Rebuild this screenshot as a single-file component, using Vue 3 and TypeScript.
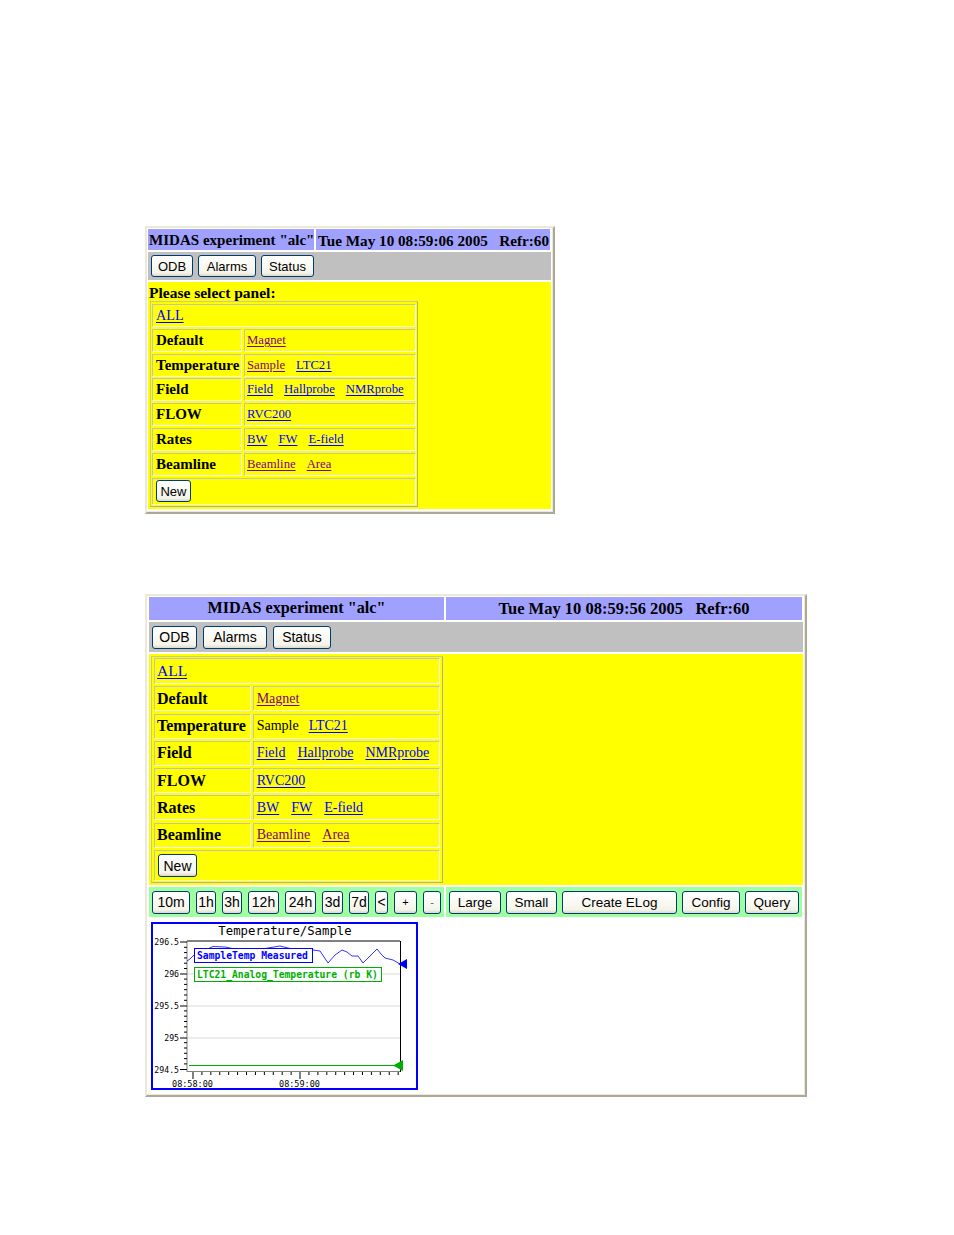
<script setup lang="ts">
interface Btn { label: string; width: number }
interface Link { text: string; visited?: boolean; plain?: boolean }
interface Row { name: string; links: Link[] }

const rowsA: Row[] = [
  { name: 'Default', links: [{ text: 'Magnet', visited: true }] },
  { name: 'Temperature', links: [{ text: 'Sample', visited: true }, { text: 'LTC21' }] },
  { name: 'Field', links: [{ text: 'Field' }, { text: 'Hallprobe' }, { text: 'NMRprobe' }] },
  { name: 'FLOW', links: [{ text: 'RVC200' }] },
  { name: 'Rates', links: [{ text: 'BW' }, { text: 'FW' }, { text: 'E-field' }] },
  { name: 'Beamline', links: [{ text: 'Beamline', visited: true }, { text: 'Area', visited: true }] },
]
const rowsB: Row[] = rowsA.map((r) =>
  r.name === 'Temperature'
    ? { name: r.name, links: [{ text: 'Sample', plain: true }, { text: 'LTC21' }] }
    : r,
)
const navA: Btn[] = [
  { label: 'ODB', width: 42 },
  { label: 'Alarms', width: 58 },
  { label: 'Status', width: 53 },
]
const navB: Btn[] = [
  { label: 'ODB', width: 45 },
  { label: 'Alarms', width: 64 },
  { label: 'Status', width: 58 },
]
const spans: Btn[] = [
  { label: '10m', width: 38 },
  { label: '1h', width: 20 },
  { label: '3h', width: 20 },
  { label: '12h', width: 31 },
  { label: '24h', width: 31 },
  { label: '3d', width: 21 },
  { label: '7d', width: 20 },
  { label: '<', width: 13 },
  { label: '+', width: 23 },
  { label: '-', width: 18 },
]
const actions: Btn[] = [
  { label: 'Large', width: 52 },
  { label: 'Small', width: 51 },
  { label: 'Create ELog', width: 115 },
  { label: 'Config', width: 58 },
  { label: 'Query', width: 54 },
]

const yMajor = [
  { y: 942, t: '296.5' },
  { y: 974, t: '296' },
  { y: 1006, t: '295.5' },
  { y: 1038, t: '295' },
  { y: 1069.5, t: '294.5' },
]
const yMinor = Array.from({ length: 25 }, (_, i) => 942 + i * 5.3).filter(
  (_, i) => i % 6 !== 0,
)
const xMinor = Array.from({ length: 24 }, (_, i) => 193 + i * 8.92).filter(
  (_, i) => i % 12 !== 0,
)
const trace =
  '187,961 190,959 197,952 205,950 213,946.5 225,947 240,950 262,949 280,946 ' +
  '296,950 313,950 320,951 328,963 335,955 342,950 347,952 352,956 358,956 ' +
  '363,963 370,956 377,949 381,954 385,958 393,960 400,964'
</script>

<template>
  <div class="page">
    <section class="win win-a">
      <div class="row head head-a">
        <div class="cell title-a">MIDAS experiment "alc"</div>
        <div class="cell date-a">Tue May 10 08:59:06 2005 &nbsp; Refr:60</div>
      </div>
      <div class="cell nav nav-a">
        <button v-for="b in navA" :key="b.label" class="btn" :style="{ width: b.width + 'px' }">{{ b.label }}</button>
      </div>
      <div class="cell yellow yellow-a">
        <div class="prompt">Please select panel:</div>
        <div class="panel panel-a">
          <div class="pcell full all"><a class="lnk">ALL</a></div>
          <div v-for="r in rowsA" :key="r.name" class="prow">
            <div class="pcell name">{{ r.name }}</div>
            <div class="pcell links">
              <a v-for="l in r.links" :key="l.text" class="lnk" :class="{ visited: l.visited }">{{ l.text }}</a>
            </div>
          </div>
          <div class="pcell full newrow"><button class="btn new">New</button></div>
        </div>
      </div>
    </section>

    <section class="win win-b">
      <div class="row head head-b">
        <div class="cell title-b">MIDAS experiment "alc"</div>
        <div class="cell date-b">Tue May 10 08:59:56 2005 &nbsp; Refr:60</div>
      </div>
      <div class="cell nav nav-b">
        <button v-for="b in navB" :key="b.label" class="btn" :style="{ width: b.width + 'px' }">{{ b.label }}</button>
      </div>
      <div class="cell yellow yellow-b">
        <div class="panel panel-b">
          <div class="pcell full all"><a class="lnk">ALL</a></div>
          <div v-for="r in rowsB" :key="r.name" class="prow">
            <div class="pcell name">{{ r.name }}</div>
            <div class="pcell links">
              <template v-for="l in r.links" :key="l.text">
                <span v-if="l.plain" class="plain">{{ l.text }}</span>
                <a v-else class="lnk" :class="{ visited: l.visited }">{{ l.text }}</a>
              </template>
            </div>
          </div>
          <div class="pcell full newrow"><button class="btn new">New</button></div>
        </div>
      </div>
      <div class="row tools">
        <div class="cell green spans">
          <button
            v-for="b in spans"
            :key="b.label"
            class="btn tool"
            :class="{ mini: b.label === '+' || b.label === '-', dim: b.label === '-' }"
            :style="{ width: b.width + 'px' }"
          >{{ b.label }}</button>
        </div>
        <div class="cell green actions">
          <button v-for="b in actions" :key="b.label" class="btn tool act" :style="{ width: b.width + 'px' }">{{ b.label }}</button>
        </div>
      </div>
      <div class="cell plotcell">
        <svg class="plot" width="267" height="168" viewBox="151 922 267 168">
          <rect x="152" y="923" width="265" height="166" fill="#fff" stroke="#0000ff" stroke-width="2" />
          <text x="285" y="935" class="ptitle" text-anchor="middle">Temperature/Sample</text>
          <g stroke="#d8d8d8">
            <line v-for="m in yMajor.slice(1, 4)" :key="m.y" x1="187" x2="400" :y1="m.y" :y2="m.y" />
          </g>
          <line x1="187" x2="400" y1="941" y2="941" stroke="#000" />
          <line x1="400.5" x2="400.5" y1="941" y2="1072" stroke="#000" />
          <line x1="187" x2="187" y1="941" y2="1072" stroke="#808080" />
          <line x1="187" x2="400" y1="1071.5" y2="1071.5" stroke="#808080" />
          <g stroke="#000">
            <line v-for="y in yMinor" :key="y" x1="184" x2="187" :y1="y" :y2="y" />
            <line v-for="m in yMajor" :key="m.t" x1="180" x2="187" :y1="m.y" :y2="m.y" />
            <line v-for="x in xMinor" :key="x" :x1="x" :x2="x" y1="1072" y2="1075" />
            <line x1="193" x2="193" y1="1072" y2="1079" />
            <line x1="300" x2="300" y1="1072" y2="1079" />
          </g>
          <text v-for="m in yMajor" :key="'l' + m.t" x="179" :y="m.y + 3" class="ylab" text-anchor="end">{{ m.t }}</text>
          <text x="192.5" y="1087" class="xlab" text-anchor="middle">08:58:00</text>
          <text x="299.5" y="1087" class="xlab" text-anchor="middle">08:59:00</text>
          <polyline :points="trace" fill="none" stroke="#0000ff" stroke-width="0.8" />
          <line x1="189" x2="400" y1="1065.5" y2="1065.5" stroke="#00b000" stroke-width="1" />
          <polygon points="398,964 407,959 407,969" fill="#0000ff" />
          <polygon points="393,1065.5 403,1060 403,1071" fill="#00b000" />
          <rect x="194.5" y="948.5" width="118" height="14" fill="#fff" stroke="#0000ff" />
          <text x="197" y="959" class="leg blue">SampleTemp Measured</text>
          <rect x="194.5" y="967.5" width="187" height="14" fill="#fff" stroke="#00b000" />
          <text x="197" y="978" class="leg grn">LTC21_Analog_Temperature (rb K)</text>
        </svg>
      </div>
    </section>
  </div>
</template>

<style>
html, body { background: #fff; }
</style>

<style scoped>
.page {
  width: 954px;
  height: 1235px;
  box-sizing: border-box;
  padding: 226px 0 0 145px;
  display: flex;
  flex-direction: column;
  gap: 80px;
  font-family: "Liberation Serif", serif;
  color: #000;
}
.win {
  box-sizing: border-box;
  display: flex;
  flex-direction: column;
  gap: 2px;
  background: #fff;
  border: 2px solid;
  border-color: #ece9d8 #aca899 #aca899 #ece9d8;
  box-shadow: inset -1px -1px 0 #ece9d8;
}
.win-a { width: 410px; height: 288px; padding: 1px 2px 2px 1px; }
.win-b { width: 662px; height: 503px; padding: 1px 2px 2px 2px; }
.row { display: flex; gap: 2px; }
.cell { box-sizing: border-box; }
.head .cell {
  background: #a0a0ff;
  font-weight: bold;
  white-space: nowrap;
}
.head-a .cell { height: 21px; line-height: 23px; font-size: 15.05px; }
.head-a .date-a { font-size: 15.2px; }
.title-a { width: 166px; padding-left: 1px; }
.date-a { width: 234px; padding-left: 2px; }
.head-b .cell { height: 23px; line-height: 23px; text-align: center; }
.title-b { width: 295px; font-size: 16.2px; }
.date-b { width: 356px; font-size: 16.5px; }
.nav {
  background: #c0c0c0;
  display: flex;
  align-items: center;
  gap: 5px;
  padding-left: 3px;
}
.nav-a { height: 28px; }
.nav-b { height: 30px; gap: 6px; }
.nav-b .btn { font-size: 14px; height: 23px; }
.yellow { background: #ffff00; }
.yellow-a { height: 227px; padding-left: 2px; }
.yellow-b { height: 231px; padding: 2px 0 0 2px; }
.prompt {
  font-weight: bold;
  font-size: 15.5px;
  line-height: 21px;
  height: 19px;
  margin-left: -1px;
}
.panel {
  box-sizing: border-box;
  border: 1px solid;
  border-color: #c8c8a0 #b0b090 #b0b090 #c8c8a0;
  padding: 1px;
  display: flex;
  flex-direction: column;
}
.panel-a { width: 268px; height: 206px; gap: 1.8px; padding-top: 2px; }
.panel-b { width: 292px; height: 227px; gap: 2.3px; padding: 1px 2px; }
.prow { display: flex; gap: 2px; flex: none; }
.panel-a .prow { height: 23px; }
.panel-b .prow { height: 25px; }
.pcell {
  box-sizing: border-box;
  border: 1px solid;
  border-color: #c4c4a8 #fff #fff #c4c4a8;
  display: flex;
  align-items: center;
  white-space: nowrap;
}
.full { padding-left: 3px; }
.newrow { flex: 1; }
.name { font-weight: bold; font-size: 15px; padding-left: 3px; }
.panel-a .name { width: 90px; }
.panel-a .links { width: 172px; }
.panel-b .name { width: 97px; padding-left: 2px; font-size: 16px; }
.panel-b .links { width: 188px; padding-left: 3px; font-size: 14px; }
.links { gap: 11px; padding-left: 2px; font-size: 12.7px; }
.panel-b .links { gap: 12px; }
.lnk { color: #0000ff; text-decoration: underline; text-underline-offset: 2px; }
.visited { color: #800080; }
.plain { color: #000; margin-right: -2px; }
.all { flex: none; }
.panel-a .all { font-size: 14.2px; height: 23px; }
.panel-b .all { font-size: 15.5px; height: 26px; padding-left: 2px; }
.btn {
  box-sizing: border-box;
  height: 22px;
  padding: 0;
  border: 1px solid #003c74;
  border-radius: 3px;
  background: linear-gradient(#ffffff, #f5f4ea 85%, #dcd8c8);
  font-family: "Liberation Sans", sans-serif;
  font-size: 13px;
  color: #000;
  text-align: center;
}
.new { width: 35px; }
.panel-b .new { width: 39px; height: 23px; font-size: 14px; }
.green { background: #a0ffa0; height: 30px; display: flex; align-items: center; }
.spans { width: 295px; padding-left: 3px; gap: 6px; }
.actions { width: 356px; padding-left: 3px; gap: 5px; }
.tool { height: 23px; font-size: 14px; }
.mini { font-size: 11px; }
.dim { color: #666; }
.act { font-size: 13.5px; }
.plotcell { flex: 1; padding: 3px 0 0 2px; background: #fff; }
.plot { display: block; }
.ptitle { font-family: "DejaVu Sans Mono", monospace; font-size: 12.3px; fill: #000; }
.ylab, .xlab { font-family: "DejaVu Sans Mono", monospace; font-size: 8.2px; fill: #000; }
.xlab { font-size: 8.5px; }
.leg { font-family: "DejaVu Sans Mono", monospace; font-size: 9.7px; font-weight: bold; }
.blue { fill: #0000ff; }
.grn { fill: #00b000; }
</style>
